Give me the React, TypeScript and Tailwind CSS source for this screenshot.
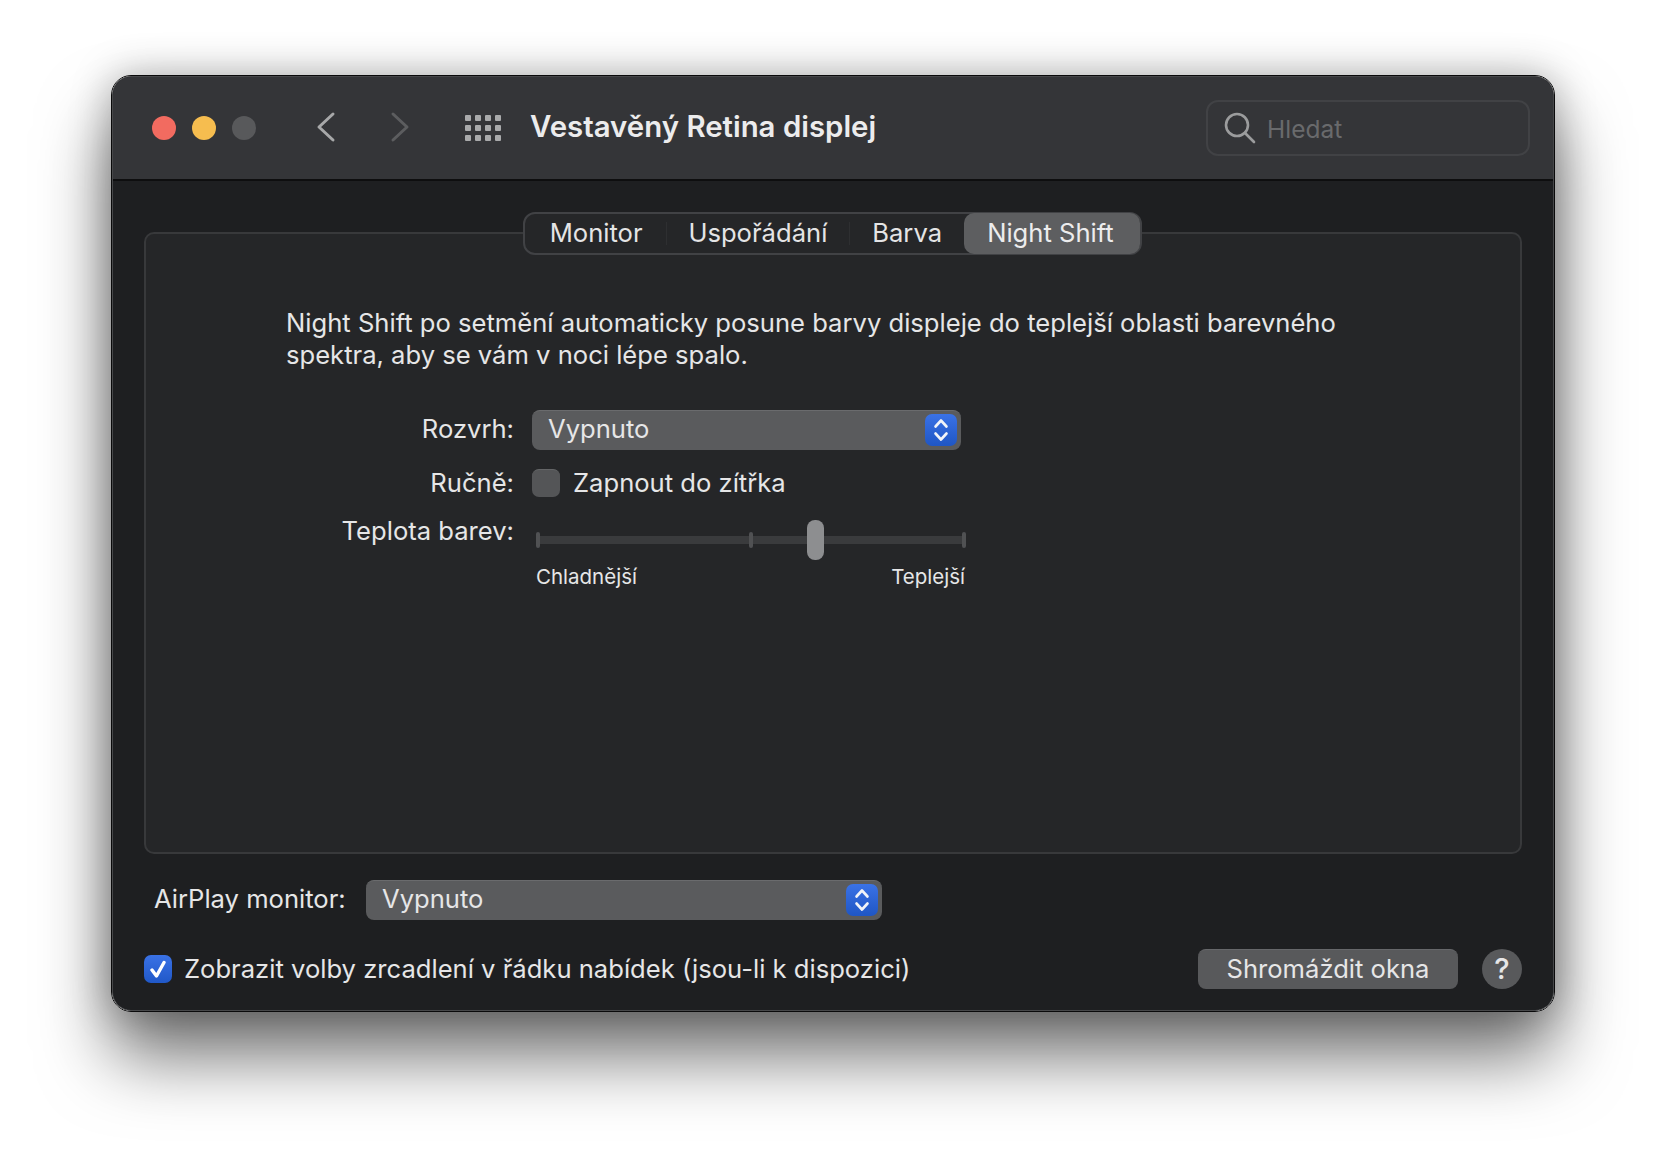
import React from "react";

function Stepper() {
  return (
    <div className="w-[32px] h-[32px] rounded-[7px] bg-gradient-to-b from-[#3a72e6] to-[#1f56c4] flex items-center justify-center">
      <svg width="18" height="26" viewBox="0 0 18 26" fill="none" stroke="#f2f4f8" strokeWidth="2.6" strokeLinecap="round" strokeLinejoin="round">
        <path d="M3.5 9.5 9 3.5l5.5 6" />
        <path d="M3.5 16.5 9 22.5l5.5-6" />
      </svg>
    </div>
  );
}

function Select({ width }: { width: string }) {
  return (
    <div className={`${width} h-[40px] shrink-0 rounded-[8px] bg-[#5a5b5d] border-t border-[#6a6b6d] pl-[16px] pr-[4px] pb-[2px] flex items-center justify-between text-[25.6px] text-[#e6e6e7]`}>
      <span>Vypnuto</span>
      <Stepper />
    </div>
  );
}

function Tab({ label, className = "" }: { label: string; className?: string }) {
  return <div className={`flex items-center justify-center text-[25.6px] text-[#e4e4e5] ${className}`}>{label}</div>;
}

export default function App() {
  return (
    <div className="w-[1666px] h-[1160px] bg-white pt-[75px] pl-[111px] overflow-hidden font-['Inter',sans-serif]">
      <div className="w-[1444px] h-[937px] rounded-[20px] border border-[#0a0a0b] shadow-[0_45px_70px_rgba(0,0,0,0.55),0_0_40px_rgba(0,0,0,0.28)]">
        <div className="w-full h-full rounded-[19px] bg-[#1e1f21] border border-[#47484a] flex flex-col overflow-hidden">
          {/* Title bar */}
          <div className="h-[104px] shrink-0 bg-[#343538] border-b-2 border-[#0e0e0f] pl-[39px] pr-[23px] flex items-center">
            <div className="flex gap-[16px]">
              <div className="w-[24px] h-[24px] rounded-full bg-[#f26b60]" />
              <div className="w-[24px] h-[24px] rounded-full bg-[#f6bd4f]" />
              <div className="w-[24px] h-[24px] rounded-full bg-[#58595b]" />
            </div>
            <svg className="ml-[60px] mb-[2px]" width="20" height="32" viewBox="0 0 20 32" fill="none" stroke="#a7a8a9" strokeWidth="3" strokeLinecap="round" strokeLinejoin="round">
              <path d="M17 3 3 16l14 13" />
            </svg>
            <svg className="ml-[54px] mb-[2px]" width="20" height="32" viewBox="0 0 20 32" fill="none" stroke="#5c5d5f" strokeWidth="3" strokeLinecap="round" strokeLinejoin="round">
              <path d="M3 3l14 13L3 29" />
            </svg>
            <svg className="ml-[55px]" width="36" height="26" viewBox="0 0 36 26" fill="#a9aaab">
              <rect x="0" y="0" width="6" height="6" rx="1" /><rect x="10" y="0" width="6" height="6" rx="1" /><rect x="20" y="0" width="6" height="6" rx="1" /><rect x="30" y="0" width="6" height="6" rx="1" />
              <rect x="0" y="10" width="6" height="6" rx="1" /><rect x="10" y="10" width="6" height="6" rx="1" /><rect x="20" y="10" width="6" height="6" rx="1" /><rect x="30" y="10" width="6" height="6" rx="1" />
              <rect x="0" y="20" width="6" height="6" rx="1" /><rect x="10" y="20" width="6" height="6" rx="1" /><rect x="20" y="20" width="6" height="6" rx="1" /><rect x="30" y="20" width="6" height="6" rx="1" />
            </svg>
            <div className="ml-[29px] mb-[2px] text-[29.4px] font-semibold text-[#ececed]">Vestavěný Retina displej</div>
            <div className="ml-auto w-[324px] h-[56px] rounded-[12px] border-2 border-[#414245] flex items-center pl-[16px]">
              <svg width="32" height="32" viewBox="0 0 32 32" fill="none" stroke="#9b9c9d" strokeWidth="2.6" strokeLinecap="round">
                <circle cx="13" cy="13" r="11" />
                <path d="M21 21l9 9" />
              </svg>
              <span className="ml-[11px] mt-[2px] text-[24.5px] text-[#696a6c]">Hledat</span>
            </div>
          </div>

          {/* Body */}
          <div className="flex-1 px-[31px] pt-[31px] flex flex-col">
            <div className="h-[43px] relative z-10 flex justify-center pr-[2px]">
              <div className="w-[619px] h-[43px] rounded-[12px] bg-[#252628] border-2 border-[#414245] pl-[2px] flex items-stretch">
                <Tab label="Monitor" className="w-[140px]" />
                <div className="w-[1px] my-[8px] bg-[#2e2f31]" />
                <Tab label="Uspořádání" className="w-[183px]" />
                <div className="w-[1px] my-[8px] bg-[#2e2f31]" />
                <Tab label="Barva" className="w-[115px]" />
                <div className="w-[176px] -my-[1px] pr-[3px] rounded-[10px] bg-[#5d5e60] flex items-center justify-center text-[25.6px] text-[#ececed]">Night Shift</div>
              </div>
            </div>
            <div className="h-[622px] -mt-[23px] rounded-[10px] bg-[#252628] border-2 border-[#38393b] pl-[140px] pt-[73px]">
              <p className="w-[1085px] text-[25.6px] leading-[32px] text-[#e6e6e7]">
                Night Shift po setmění automaticky posune barvy displeje do teplejší oblasti barevného spektra, aby se vám v noci lépe spalo.
              </p>
              <div className="mt-[39px] -ml-[140px] flex flex-col">
                <div className="flex items-center h-[40px]">
                  <div className="w-[368px] -mt-[2px] text-right text-[25.6px] text-[#e6e6e7]">Rozvrh:</div>
                  <div className="ml-[18px]"><Select width="w-[429px]" /></div>
                </div>
                <div className="flex items-center h-[28px] mt-[19px]">
                  <div className="w-[368px] text-right text-[25.6px] text-[#e6e6e7]">Ručně:</div>
                  <div className="ml-[18px] w-[28px] h-[28px] rounded-[7px] bg-[#545557] border-t border-[#646567]" />
                  <div className="ml-[13px] text-[25.6px] text-[#e6e6e7]">Zapnout do zítřka</div>
                </div>
                <div className="flex items-start mt-[18px]">
                  <div className="w-[368px] text-right text-[25.6px] leading-[32px] text-[#e6e6e7]">Teplota barev:</div>
                  <div className="ml-[22px] w-[430px] mt-[5px]">
                    <div className="relative h-[40px] flex items-center justify-between">
                      <div className="absolute inset-x-0 h-[8px] top-[16px] bg-[#3a3b3d]" />
                      <div className="relative w-[4px] h-[16px] rounded-full bg-[#505153]" />
                      <div className="relative w-[4px] h-[16px] rounded-full bg-[#505153]" />
                      <div className="relative w-[4px] h-[16px] rounded-full bg-[#505153]" />
                      <div className="absolute left-[271px] top-0 w-[17px] h-[40px] rounded-[8px] bg-[#8d8e90]" />
                    </div>
                    <div className="mt-[2px] flex justify-between pr-[1px] text-[20.5px] text-[#e6e6e7]">
                      <span>Chladnější</span>
                      <span>Teplejší</span>
                    </div>
                  </div>
                </div>
              </div>
            </div>

            <div className="mt-[26px] h-[40px] flex items-center pl-[10px]">
              <div className="w-[201px] -mt-[2px] text-[25.6px] text-[#e6e6e7]">AirPlay monitor:</div>
              <div className="ml-[11px]"><Select width="w-[516px]" /></div>
            </div>

            <div className="mt-[29px] h-[40px] flex items-center">
              <div className="w-[28px] h-[28px] rounded-[7px] bg-gradient-to-b from-[#3a72e6] to-[#2058c8] flex items-center justify-center">
                <svg width="18" height="18" viewBox="0 0 18 18" fill="none" stroke="#ffffff" strokeWidth="3.4" strokeLinecap="round" strokeLinejoin="round">
                  <path d="M3 10l4.5 6L15 2.5" />
                </svg>
              </div>
              <div className="ml-[12px] text-[25.6px] text-[#e6e6e7]">Zobrazit volby zrcadlení v řádku nabídek (jsou-li k dispozici)</div>
              <div className="ml-auto w-[260px] h-[40px] rounded-[8px] bg-[#58595b] border-t border-[#66676a] flex items-center justify-center text-[25.6px] text-[#e6e6e7]">Shromáždit okna</div>
              <div className="ml-[24px] w-[40px] h-[40px] rounded-full bg-[#58595b] flex items-center justify-center text-[29px] font-medium text-[#e6e6e7]">?</div>
            </div>
          </div>
        </div>
      </div>
    </div>
  );
}
